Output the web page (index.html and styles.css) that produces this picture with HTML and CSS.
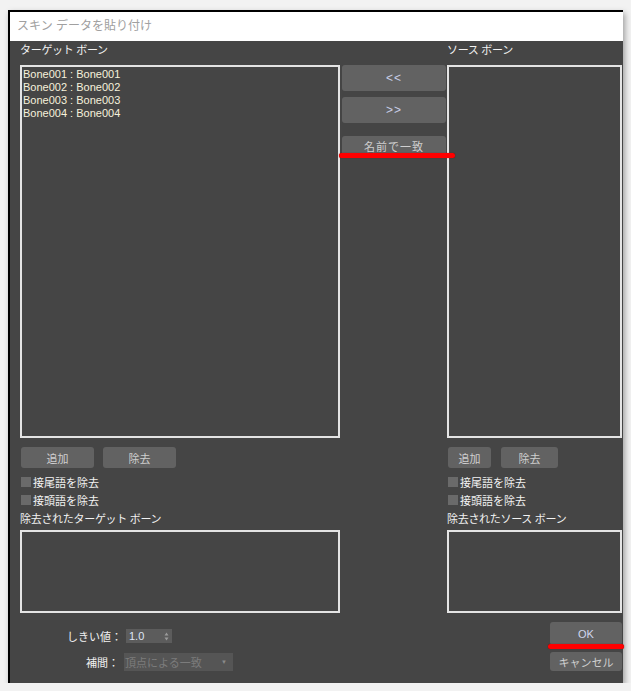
FILE: index.html
```html
<!DOCTYPE html>
<html lang="ja">
<head>
    <meta charset="UTF-8">
    <title>スキン データを貼り付け</title>
    <link rel="stylesheet" href="styles.css">
</head>
<body>
    <div class="window">
        <div class="titlebar">スキン データを貼り付け</div>
        <div class="dialog">
            <div class="col col-left">
                <div class="label">ターゲット ボーン</div>
                <div class="listbox big">
                    <div class="item">Bone001 : Bone001</div>
                    <div class="item">Bone002 : Bone002</div>
                    <div class="item">Bone003 : Bone003</div>
                    <div class="item">Bone004 : Bone004</div>
                </div>
                <div class="btn-row">
                    <button class="btn btn-add">追加</button>
                    <button class="btn btn-del">除去</button>
                </div>
                <div class="check-row"><span class="check"></span>接尾語を除去</div>
                <div class="check-row"><span class="check"></span>接頭語を除去</div>
                <div class="label small-label">除去されたターゲット ボーン</div>
                <div class="listbox small"></div>
                <div class="field-row threshold">
                    <span class="field-label">しきい値：</span>
                    <div class="spinner">
                        <span class="spin-value">1.0</span>
                        <span class="spin-arrows">
                            <svg width="5" height="9" viewBox="0 0 5 9"><path d="M2.5 0.5 L4.5 3.5 H0.5 Z M2.5 8.5 L4.5 5.5 H0.5 Z" fill="#9a9a9a"/></svg>
                        </span>
                    </div>
                </div>
                <div class="field-row interp">
                    <span class="field-label">補間：</span>
                    <div class="dropdown">
                        <span>頂点による一致</span>
                        <span class="drop-arrow">▼</span>
                    </div>
                </div>
            </div>

            <div class="col col-mid">
                <button class="btn mid-btn arrows">&lt;&lt;</button>
                <button class="btn mid-btn arrows">&gt;&gt;</button>
                <button class="btn mid-btn match">名前で一致<span class="mark mark-match"></span></button>
            </div>

            <div class="col col-right">
                <div class="label">ソース ボーン</div>
                <div class="listbox big"></div>
                <div class="btn-row right-btns">
                    <button class="btn btn-add-r">追加</button>
                    <button class="btn btn-del-r">除去</button>
                </div>
                <div class="check-row"><span class="check"></span>接尾語を除去</div>
                <div class="check-row"><span class="check"></span>接頭語を除去</div>
                <div class="label small-label">除去されたソース ボーン</div>
                <div class="listbox small"></div>
                <button class="btn btn-ok">OK<span class="mark mark-ok"></span></button>
                <button class="btn btn-cancel">キャンセル</button>
            </div>
        </div>
    </div>
</body>
</html>
```

FILE: styles.css
```css
body {
    margin: 0;
    background: #f2f2f2;
    font-family: "Liberation Sans", "Noto Sans CJK JP", sans-serif;
    font-size: 11px;
}
.window {
    position: relative;
    margin: 10px 0 0 8px;
    width: 613px;
    height: 671px;
    border-left: 2px solid #000;
    border-top: 2px solid #000;
    box-shadow: 2px 3px 6px rgba(0, 0, 0, 0.35);
}
.titlebar {
    height: 29px;
    line-height: 28px;
    padding-left: 7px;
    background: #fff;
    color: #a0a0a0;
    font-size: 12px;
}
.dialog {
    display: flex;
    height: 642px;
    padding-left: 10px;
    background: #454545;
    color: #f2f2f2;
}
.col {
    display: flex;
    flex-direction: column;
}
.col-left {
    width: 320px;
}
.col-mid {
    width: 104px;
    margin-left: 2px;
    padding-top: 24px;
}
.col-right {
    width: 175px;
    margin-left: 1px;
}
.label {
    height: 24px;
    line-height: 18px;
    letter-spacing: -0.3px;
}
.listbox {
    box-sizing: border-box;
    border: 2px solid #e4e4e4;
    background: #454545;
}
.listbox.big {
    height: 373px;
    padding: 1px 0 0 1px;
}
.listbox.small {
    height: 83px;
}
.item {
    line-height: 13px;
    color: #f6f1dc;
}
.btn {
    position: relative;
    border: none;
    border-radius: 3px;
    background: #626262;
    color: #cfcfcf;
    font-family: inherit;
    font-size: 11px;
    padding: 0;
    cursor: pointer;
}
.btn-row {
    display: flex;
    margin-top: 9px;
    height: 21px;
    padding-left: 1px;
}
.btn-add {
    width: 73px;
}
.btn-del {
    width: 73px;
    margin-left: 9px;
}
.btn-add-r {
    width: 43px;
}
.btn-del-r {
    width: 57px;
    margin-left: 10px;
}
.check-row {
    display: flex;
    align-items: center;
    height: 18px;
    padding-left: 1px;
}
.btn-row + .check-row {
    margin-top: 5px;
}
.check {
    width: 10px;
    height: 10px;
    margin-right: 2px;
    background: #6a6a6a;
}
.small-label {
    height: 20px;
    line-height: 18px;
    margin-top: 1px;
}
.mid-btn {
    height: 26px;
    margin-bottom: 6px;
}
.arrows {
    color: #c9cfe6;
    font-size: 12px;
    letter-spacing: 1px;
}
.match {
    height: 22px;
    margin-top: 7px;
    line-height: 22px;
    letter-spacing: 1px;
}
.mark {
    position: absolute;
    height: 5px;
    border-radius: 3px;
    background: #ff0000;
    box-shadow: 0 0 1px #700;
}
.mark-match {
    left: -3px;
    top: 17px;
    width: 116px;
}
.mark-ok {
    left: -2px;
    top: 22px;
    width: 76px;
}
.field-row {
    display: flex;
    align-items: center;
}
.threshold {
    margin-top: 16px;
    height: 14px;
}
.interp {
    margin-top: 10px;
    height: 18px;
}
.field-label {
    text-align: right;
}
.threshold .field-label {
    width: 102px;
    margin-right: 4px;
}
.interp .field-label {
    width: 99px;
    margin-right: 5px;
}
.spinner {
    display: flex;
    align-items: center;
    justify-content: space-between;
    width: 46px;
    height: 14px;
    padding: 0 3px;
    box-sizing: border-box;
    background: #5c5c5c;
}
.spin-value {
    color: #dfe6f6;
}
.spin-arrows {
    display: flex;
}
.dropdown {
    display: flex;
    align-items: center;
    justify-content: space-between;
    width: 109px;
    height: 18px;
    padding: 0 6px 0 1px;
    box-sizing: border-box;
    background: #555;
    color: #7c7c7c;
    font-size: 11px;
}
.drop-arrow {
    font-size: 6px;
    color: #8a8a8a;
}
.btn-ok {
    width: 72px;
    height: 23px;
    margin: 9px 0 0 103px;
    color: #cfd6ee;
}
.btn-cancel {
    width: 72px;
    height: 19px;
    margin: 7px 0 0 103px;
}
```
